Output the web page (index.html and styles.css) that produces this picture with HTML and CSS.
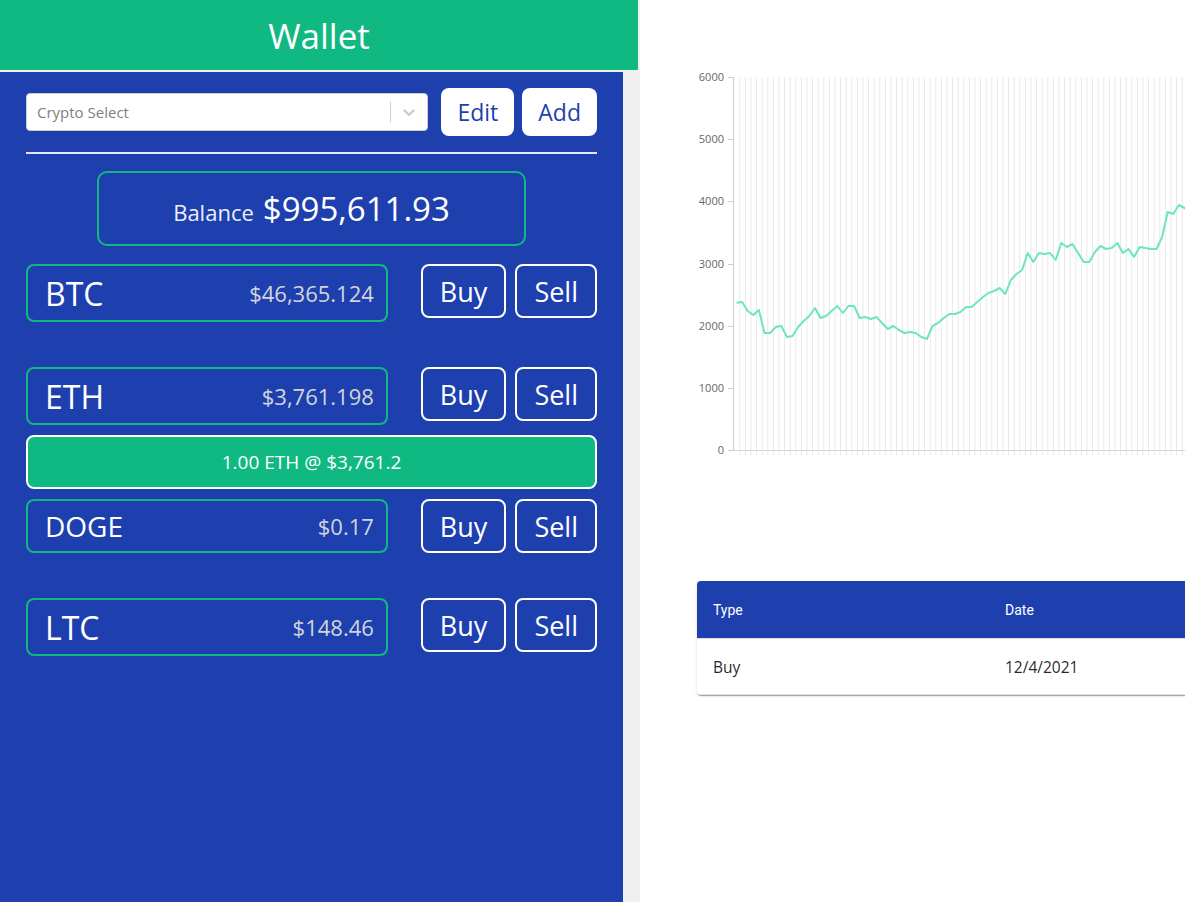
FILE: index.html
```html
<!DOCTYPE html>
<html lang="en">
<head>
<meta charset="utf-8">
<title>Wallet</title>
<link rel="stylesheet" href="styles.css">
</head>
<body>
<aside class="sidebar">
  <header class="header">Wallet</header>
  <div class="panel-row">
    <div class="panel">
      <div class="toolbar">
        <div class="select">
          <span class="select-value">Crypto Select</span>
          <span class="select-sep"></span>
          <span class="select-arrow">
            <svg width="20" height="20" viewBox="0 0 20 20"><path fill="#cccccc" d="M4.516 7.548c0.436-0.446 1.043-0.481 1.576 0l3.908 3.747 3.908-3.747c0.533-0.481 1.141-0.446 1.574 0 0.436 0.445 0.408 1.197 0 1.615-0.406 0.418-4.695 4.502-4.695 4.502-0.217 0.223-0.502 0.335-0.787 0.335s-0.57-0.112-0.789-0.335c0 0-4.287-4.084-4.695-4.502s-0.436-1.17 0-1.615z"/></svg>
          </span>
        </div>
        <button class="tool-btn">Edit</button>
        <button class="tool-btn">Add</button>
      </div>
      <hr class="divider">
      <div class="balance">
        <div class="balance-inner">
          <span class="balance-label">Balance</span>
          <span class="balance-amount">$995,611.93</span>
        </div>
      </div>

      <div class="coin">
        <div class="coin-row">
          <div class="coin-box"><span class="coin-name">BTC</span><span class="coin-price">$46,365.124</span></div>
          <div class="actions"><button class="action">Buy</button><button class="action">Sell</button></div>
        </div>
        <div class="trades"></div>
      </div>

      <div class="coin">
        <div class="coin-row">
          <div class="coin-box"><span class="coin-name">ETH</span><span class="coin-price">$3,761.198</span></div>
          <div class="actions"><button class="action">Buy</button><button class="action">Sell</button></div>
        </div>
        <div class="trades">
          <div class="trade">1.00 ETH @ $3,761.2</div>
        </div>
      </div>

      <div class="coin">
        <div class="coin-row">
          <div class="coin-box compact"><span class="coin-name">DOGE</span><span class="coin-price">$0.17</span></div>
          <div class="actions"><button class="action">Buy</button><button class="action">Sell</button></div>
        </div>
        <div class="trades"></div>
      </div>

      <div class="coin">
        <div class="coin-row">
          <div class="coin-box"><span class="coin-name">LTC</span><span class="coin-price">$148.46</span></div>
          <div class="actions"><button class="action">Buy</button><button class="action">Sell</button></div>
        </div>
        <div class="trades"></div>
      </div>
    </div>
  </div>
</aside>

<main class="main">
  <svg class="chart" width="900" height="520" viewBox="0 0 900 520">
    <defs>
      <pattern id="vgrid" x="42.3" y="0" width="5.6" height="520" patternUnits="userSpaceOnUse">
        <rect x="0" y="0" width="1" height="520" fill="#e8e8e8"/>
      </pattern>
    </defs>
    <rect x="40" y="37" width="860" height="378" fill="url(#vgrid)"/>
    <line x1="36.5" y1="37" x2="36.5" y2="410" stroke="#cccccc"/>
    <line x1="36.5" y1="410.5" x2="900" y2="410.5" stroke="#d6d6d6"/>
    <g stroke="#cccccc">
      <line x1="31" y1="37.5" x2="37" y2="37.5"/>
      <line x1="31" y1="99.5" x2="37" y2="99.5"/>
      <line x1="31" y1="161.5" x2="37" y2="161.5"/>
      <line x1="31" y1="224.5" x2="37" y2="224.5"/>
      <line x1="31" y1="286.5" x2="37" y2="286.5"/>
      <line x1="31" y1="348.5" x2="37" y2="348.5"/>
      <line x1="31" y1="410.5" x2="37" y2="410.5"/>
    </g>
    <g class="tick-label" text-anchor="end">
      <text x="27" y="41">6000</text>
      <text x="27" y="103">5000</text>
      <text x="27" y="165">4000</text>
      <text x="27" y="228">3000</text>
      <text x="27" y="290">2000</text>
      <text x="27" y="352">1000</text>
      <text x="27" y="414">0</text>
    </g>
    <polyline fill="none" stroke="#6ee7b7" stroke-width="2" stroke-linejoin="round"
      points="39.5,262.7 45.1,262 50.7,271 56.3,275 61.9,270 67.5,293 73.1,293 78.7,287 84.3,286 89.9,297 95.5,296 101.1,287 106.7,281 112.3,276 117.9,268 123.5,278 129.1,276 134.7,271 140.3,266 145.9,273 151.5,266 157.1,266 162.7,278 168.3,277 173.9,279 179.5,277 185.1,283 190.7,289 196.3,286 201.9,290 207.5,293 213.1,292 218.7,293 224.3,297 229.9,299 235.5,286 241.1,283 246.7,278 252.3,274 257.9,274 263.5,272 269.1,267 274.7,267 280.3,262 285.9,257 291.5,253 297.1,251 302.7,248 308.3,254 313.9,240 319.5,234 325.1,230 330.7,213 336.3,222 341.9,213 347.5,214 353.1,213 358.7,220 364.3,203 369.9,207 375.5,204 381.1,213 386.7,222 392.3,222 397.9,212 403.5,206 409.1,209 414.7,208 420.3,203 425.9,213 431.5,209 437.1,217 442.7,207 448.3,208 453.9,209 459.5,209 465.1,197 470.7,172 476.3,174 481.9,165 487.5,168 493.1,171 498.7,163 504.3,166 509.9,160"/>
  </svg>

  <div class="table-paper">
    <table class="tx-table">
      <colgroup><col class="col-type"><col class="col-date"></colgroup>
      <thead>
        <tr><th>Type</th><th>Date</th></tr>
      </thead>
      <tbody>
        <tr><td>Buy</td><td>12/4/2021</td></tr>
      </tbody>
    </table>
  </div>
</main>
</body>
</html>
```

FILE: styles.css
```css
html, body {
  margin: 0;
  padding: 0;
}

body {
  font-family: "Open Sans", "Noto Sans", sans-serif;
  display: flex;
  height: 902px;
  overflow: hidden;
  background: #ffffff;
}

.sidebar {
  width: 640px;
  flex: none;
  display: flex;
  flex-direction: column;
  background: #f0f0f0;
}

.header {
  width: 638px;
  height: 70px;
  flex: none;
  background: #10b981;
  color: #ffffff;
  font-size: 35px;
  display: flex;
  align-items: center;
  justify-content: center;
  margin-bottom: 2px;
}

.panel-row {
  flex: 1;
  display: flex;
}

.panel {
  width: 623px;
  box-sizing: border-box;
  background: #1e40af;
  padding: 16px 26px 0;
}

.toolbar {
  display: flex;
  align-items: center;
}

.select {
  flex: 1;
  height: 38px;
  box-sizing: border-box;
  background: #ffffff;
  border: 1px solid #cccccc;
  border-radius: 4px;
  display: flex;
  align-items: center;
  margin-right: 13px;
}

.select-value {
  flex: 1;
  padding-left: 10px;
  color: #808080;
  font-size: 15px;
}

.select-sep {
  width: 1px;
  height: 20px;
  background: #cccccc;
}

.select-arrow {
  width: 36px;
  display: flex;
  justify-content: center;
  align-items: center;
}

.tool-btn {
  height: 48px;
  background: #ffffff;
  color: #1e40af;
  border: none;
  border-radius: 8px;
  font-family: inherit;
  font-size: 23px;
  padding: 0 16px;
  cursor: pointer;
}

.tool-btn + .tool-btn {
  margin-left: 8px;
}

.divider {
  height: 2px;
  border: 0;
  background: #e6e9f5;
  margin: 16px 0 17px;
}

.balance {
  width: 75%;
  height: 75px;
  box-sizing: border-box;
  margin: 0 auto 18px;
  border: 2px solid #10b981;
  border-radius: 10px;
  display: flex;
  align-items: center;
  justify-content: center;
  color: #ffffff;
}

.balance-inner {
  display: flex;
  align-items: baseline;
}

.balance-label {
  font-size: 22px;
  color: #eceef8;
}

.balance-amount {
  font-size: 33px;
  margin-left: 9px;
}

.coin-row {
  display: flex;
  align-items: flex-start;
}

.coin-box {
  flex: 1;
  height: 58px;
  box-sizing: border-box;
  border: 2px solid #10b981;
  border-radius: 8px;
  display: flex;
  align-items: center;
  justify-content: space-between;
  padding: 0 12px 0 17px;
  color: #ffffff;
}

.coin-box.compact {
  height: 54px;
}

.coin-name {
  font-size: 32px;
}

.coin-box.compact .coin-name {
  font-size: 28px;
}

.coin-price {
  font-size: 22px;
  color: #d1d5db;
}

.actions {
  display: flex;
  gap: 9px;
  margin-left: 33px;
}

.action {
  height: 54px;
  box-sizing: border-box;
  border: 2px solid #ffffff;
  border-radius: 8px;
  background: transparent;
  color: #ffffff;
  font-family: inherit;
  font-size: 27px;
  padding: 0 17px;
  cursor: pointer;
}

.trades {
  min-height: 45px;
  box-sizing: border-box;
  padding: 10px 0;
}

.trade {
  height: 54px;
  box-sizing: border-box;
  background: #10b981;
  border: 2px solid #ffffff;
  border-radius: 8px;
  display: flex;
  align-items: center;
  justify-content: center;
  color: #ffffff;
  font-size: 19px;
}

.main {
  flex: 1;
  min-width: 0;
  overflow: hidden;
  padding: 40px 0 0 57px;
  background: #ffffff;
}

.chart {
  display: block;
}

.tick-label {
  font-size: 11px;
  fill: #666666;
}

.table-paper {
  margin-top: 21px;
  width: 1000px;
  background: #ffffff;
  border-radius: 4px;
  overflow: hidden;
  box-shadow: 0 2px 1px -1px rgba(0, 0, 0, 0.2), 0 1px 1px 0 rgba(0, 0, 0, 0.14), 0 1px 3px 0 rgba(0, 0, 0, 0.12);
}

.tx-table {
  width: 100%;
  border-collapse: collapse;
  table-layout: fixed;
}

.col-type {
  width: 292px;
}

.tx-table th {
  background: #1e40af;
  color: #ffffff;
  font-family: Roboto, "Liberation Sans", sans-serif;
  font-size: 14px;
  font-weight: 400;
  text-align: left;
  padding: 17px 16px 15px;
  line-height: 25px;
  border-bottom: 1px solid #e0e0e0;
}

.tx-table td {
  padding: 16px 16px 15px;
  font-size: 15.5px;
  line-height: 24px;
  color: rgba(0, 0, 0, 0.87);
  border-bottom: 1px solid #e0e0e0;
}
```
